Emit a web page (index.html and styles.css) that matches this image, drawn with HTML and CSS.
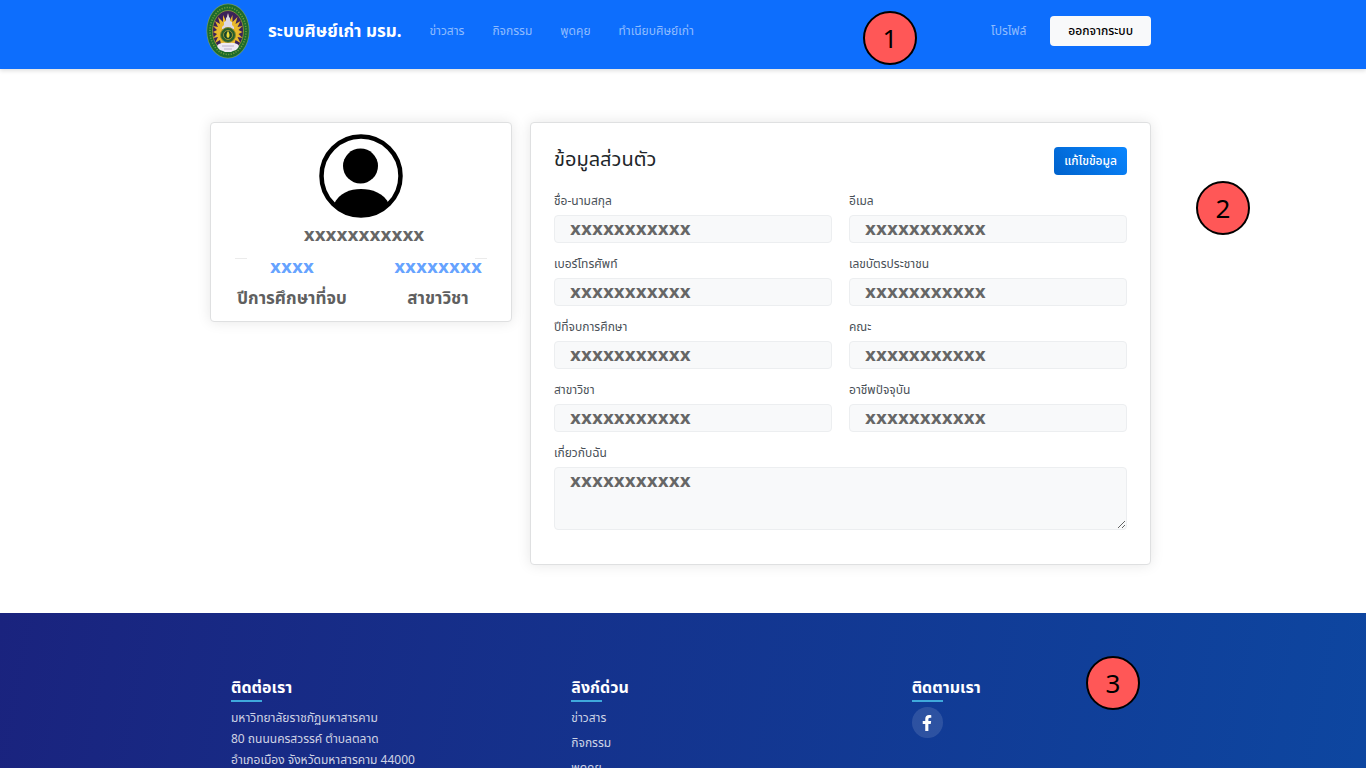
FILE: index.html
```html
<!DOCTYPE html>
<html lang="th">
<head>
<meta charset="utf-8">
<meta name="viewport" content="width=device-width, initial-scale=1">
<title>ระบบศิษย์เก่า มรม.</title>
<link rel="stylesheet" href="styles.css">
</head>
<body>
<header class="topbar">
  <div class="container topbar-inner">
    <a class="brand" href="#">
      <svg class="brand-logo" viewBox="0 0 44 56" aria-hidden="true">
        <ellipse cx="22" cy="28" rx="21.5" ry="27.5" fill="#6f9b6a"/>
        <ellipse cx="22" cy="28" rx="20.8" ry="26.8" fill="#1d6b2b"/>
        <ellipse cx="22" cy="28" rx="18" ry="23.5" fill="none" stroke="#6f9c3c" stroke-width="1.6" stroke-dasharray="1.2 1.4"/>
        <ellipse cx="22" cy="28" rx="15.5" ry="20.5" fill="#3b2259" stroke="#a4a83a" stroke-width=".7"/>
        <path fill="#e9b92c" d="M22 11l1.500 7 3-6 0 7 5-5-2 7 5-3-3 6 5-1-4 4 4 2-4 2 4 4-5-1 3 6-5-3-1 4H15l-1-4-5 3 3-6-5 1 4-4-4-2 4-2-4-4 5 1-3-6 5 3-2-7 5 5v-7l3 6z"/>
        <path fill="#dcd8e6" d="M22 10l1 4 1 1v3l2 1v3l2 2v2H16v-2l2-2v-3l2-1v-3l1-1z"/>
        <circle cx="22" cy="32" r="7.500" fill="#28602d" stroke="#8d8b2a" stroke-width="1"/>
        <circle cx="22" cy="32" r="4.500" fill="#17472d" stroke="#b7a338" stroke-width=".8"/>
        <path fill="#f0dc3c" d="M22 28c2 3 2 6 0 7-2-1-2-4 0-7z"/>
        <path fill="#eeeaf3" d="M13 41q4-2 9-1 5-1 9 1 3 1 1 4-2 3-5 3l-2 1h-6l-2-1q-3 0-5-3-2-3 1-4z"/>
        <path d="M16 43h12M18 46h8" stroke="#aaa1bd" stroke-width=".8"/>
      </svg>
      <span class="brand-name">ระบบศิษย์เก่า มรม.</span>
    </a>
    <nav class="nav" aria-label="เมนูหลัก">
      <a href="#">ข่าวสาร</a>
      <a href="#">กิจกรรม</a>
      <a href="#">พูดคุย</a>
      <a href="#">ทำเนียบศิษย์เก่า</a>
    </nav>
    <div class="account">
      <a href="#">โปรไฟล์</a>
      <button class="logout" type="button">ออกจากระบบ</button>
    </div>
  </div>
  <span class="marker marker-header">1</span>
</header>

<main class="main">
  <div class="container content">
    <section class="card profile">
      <svg class="avatar" viewBox="0 0 84 84" aria-hidden="true">
        <defs><clipPath id="face"><circle cx="42" cy="42" r="41"/></clipPath></defs>
        <circle cx="42" cy="42" r="39.500" fill="#fff" stroke="#000" stroke-width="4.500"/>
        <circle cx="41.500" cy="32" r="17.500"/>
        <path clip-path="url(#face)" d="M15 70C20 59 31 55 42 55s23 4 28 15L60 84H24z"/>
      </svg>
      <strong class="profile-name">xxxxxxxxxxx</strong>
      <div class="divider"><span></span><span></span></div>
      <dl class="stats">
        <div><dd>xxxx</dd><dt>ปีการศึกษาที่จบ</dt></div>
        <div><dd>xxxxxxxx</dd><dt>สาขาวิชา</dt></div>
      </dl>
    </section>

    <section class="card details">
      <div class="details-head">
        <h1>ข้อมูลส่วนตัว</h1>
        <button class="edit" type="button">แก้ไขข้อมูล</button>
      </div>
      <form class="form">
        <div class="field"><label for="name">ชื่อ-นามสกุล</label><input id="name" value="xxxxxxxxxxx" readonly></div>
        <div class="field"><label for="email">อีเมล</label><input id="email" value="xxxxxxxxxxx" readonly></div>
        <div class="field"><label for="phone">เบอร์โทรศัพท์</label><input id="phone" value="xxxxxxxxxxx" readonly></div>
        <div class="field"><label for="citizen">เลขบัตรประชาชน</label><input id="citizen" value="xxxxxxxxxxx" readonly></div>
        <div class="field"><label for="year">ปีที่จบการศึกษา</label><input id="year" value="xxxxxxxxxxx" readonly></div>
        <div class="field"><label for="faculty">คณะ</label><input id="faculty" value="xxxxxxxxxxx" readonly></div>
        <div class="field"><label for="major">สาขาวิชา</label><input id="major" value="xxxxxxxxxxx" readonly></div>
        <div class="field"><label for="job">อาชีพปัจจุบัน</label><input id="job" value="xxxxxxxxxxx" readonly></div>
        <div class="field field-wide"><label for="about">เกี่ยวกับฉัน</label><textarea id="about" readonly>xxxxxxxxxxx</textarea></div>
      </form>
    </section>
  </div>
  <span class="marker marker-main">2</span>
</main>

<footer class="footer">
  <div class="footer-inner">
    <section>
      <h2>ติดต่อเรา</h2>
      <address>มหาวิทยาลัยราชภัฏมหาสารคาม<br>80 ถนนนครสวรรค์ ตำบลตลาด<br>อำเภอเมือง จังหวัดมหาสารคาม 44000</address>
    </section>
    <section>
      <h2>ลิงก์ด่วน</h2>
      <ul>
        <li><a href="#">ข่าวสาร</a></li>
        <li><a href="#">กิจกรรม</a></li>
        <li><a href="#">พูดคุย</a></li>
      </ul>
    </section>
    <section>
      <h2>ติดตามเรา</h2>
      <a class="social" href="#" aria-label="Facebook">
        <svg viewBox="0 0 320 512" aria-hidden="true"><path fill="#fff" d="M279 288l14-93h-89v-60c0-25 12-50 52-50h41V7s-37-7-72-7c-73 0-121 44-121 125v70H23v93h81v224h100V288z"/></svg>
      </a>
    </section>
  </div>
  <span class="marker marker-footer">3</span>
</footer>
</body>
</html>
```
FILE: styles.css
```css
* { box-sizing: border-box; }

html { scrollbar-width: none; }

body {
  margin: 0;
  background: #fff;
  color: #212529;
  font: 12px/18px "Noto Sans", "Noto Sans Thai", Tahoma, sans-serif;
}

a { color: inherit; text-decoration: none; }
button, input, textarea { font: inherit; }

.container {
  width: 100%;
  max-width: 946px;
  margin: 0 auto;
  padding-right: 5px;
}

/* Top bar */
.topbar {
  position: relative;
  z-index: 1;
  padding-bottom: 8px;
  background: #0d6efd;
  box-shadow: 0 2px 4px rgba(0, 0, 0, .12);
}
.topbar-inner { display: flex; align-items: center; min-height: 61px; }
.brand { display: flex; align-items: center; gap: 18px; margin-left: -4px; color: #fff; }
.brand-logo { width: 44px; height: 56px; }
.brand-name { font-size: 17px; font-weight: 700; line-height: 24px; }
.nav { display: flex; gap: 28px; margin-left: 28px; color: rgba(255, 255, 255, .55); }
.account { display: flex; align-items: center; gap: 24px; margin-left: auto; color: rgba(255, 255, 255, .55); }
.logout {
  height: 30px;
  padding: 0 18px;
  border: 0;
  border-radius: 4px;
  background: #f8f9fa;
  color: #000;
  font-weight: 500;
}

/* Cards */
.main { position: relative; padding: 53px 0 48px; }
.content { display: grid; grid-template-columns: 302fr 621fr; gap: 18px; align-items: start; }
.card {
  border: 1px solid #dfe0e1;
  border-radius: 4px;
  background: #fff;
  box-shadow: 0 0 14px rgba(0, 0, 0, .1);
}

.profile { display: flex; flex-direction: column; align-items: center; padding: 11px 24px; }
.avatar { width: 84px; height: 84px; }
.profile-name, .stats dd, .field input, .field textarea {
  font-family: "DejaVu Sans", sans-serif;
  font-size: 17px;
  font-weight: 700;
  line-height: 20px;
}
.profile-name { margin: 7px 0 13px; padding-left: 6px; color: #666; }
.divider { display: flex; justify-content: space-between; align-self: stretch; }
.divider span { width: 12px; border-top: 1px solid #ebebeb; }
.stats { display: grid; grid-template-columns: 1fr 1fr; align-self: stretch; margin: -2px -24px 0 -16px; text-align: center; }
.stats dd { margin: 0 0 9px; color: #66a3ff; }
.stats dt { color: #5f5f5f; font-size: 17px; font-weight: 700; line-height: 24px; }

.details { padding: 24px 23px 34px; }
.details-head { display: flex; align-items: flex-start; justify-content: space-between; margin-bottom: 17px; }
.details-head h1 { margin: 0; font-size: 20px; font-weight: 400; line-height: 24px; }
.edit {
  height: 28px;
  padding: 0 10px;
  border: 0;
  border-radius: 4px;
  background: linear-gradient(45deg, #0062cc, #0a86ff);
  color: #fff;
  font-weight: 500;
}
.form { display: grid; grid-template-columns: 1fr 1fr; gap: 12px 17px; }
.field { display: flex; flex-direction: column; gap: 5px; min-width: 0; }
.field-wide { grid-column: 1 / -1; }
.field label { color: #495057; }
.field input, .field textarea {
  width: 100%;
  height: 28px;
  padding: 0 15px;
  border: 1px solid #eceef0;
  border-radius: 4px;
  background: #f8f9fa;
  color: #666;
}
.field textarea { height: 63px; padding-top: 3px; resize: vertical; }

/* Footer */
.footer {
  position: relative;
  min-height: 330px;
  padding: 62px 0 40px;
  background: linear-gradient(100deg, #1a237e, #0d47a1);
  color: rgba(255, 255, 255, .8);
}
.footer-inner {
  display: grid;
  grid-template-columns: repeat(3, 1fr);
  max-width: 1026px;
  margin: 0 auto;
  padding-right: 5px;
}
.footer-inner section { padding-left: 61px; }
.footer h2 { margin: 0 0 5px; color: #fff; font-size: 16px; font-weight: 700; line-height: 24px; }
.footer h2::after { content: ""; display: block; width: 31px; height: 2px; margin-top: 1px; background: #3fa9dc; }
.footer address { font-style: normal; line-height: 21px; white-space: nowrap; }
.footer ul { display: grid; gap: 7px; margin: 0; padding: 2px 0 0; list-style: none; }
.social {
  display: grid;
  place-items: center;
  width: 31px;
  height: 31px;
  border-radius: 50%;
  background: rgba(255, 255, 255, .12);
}
.social svg { width: 10px; height: 16px; }

/* Numbered markers laid over the page */
.marker {
  position: absolute;
  display: grid;
  place-items: center;
  width: 54px;
  height: 54px;
  border: 2px solid #000;
  border-radius: 50%;
  background: #ff5757;
  color: #000;
  font-size: 26px;
  line-height: 50px;
}
.marker-header { top: 11px; left: calc(50% + 180px); }
.marker-main { top: 112px; left: calc(50% + 513px); }
.marker-footer { top: 43px; left: calc(50% + 403px); }
```
